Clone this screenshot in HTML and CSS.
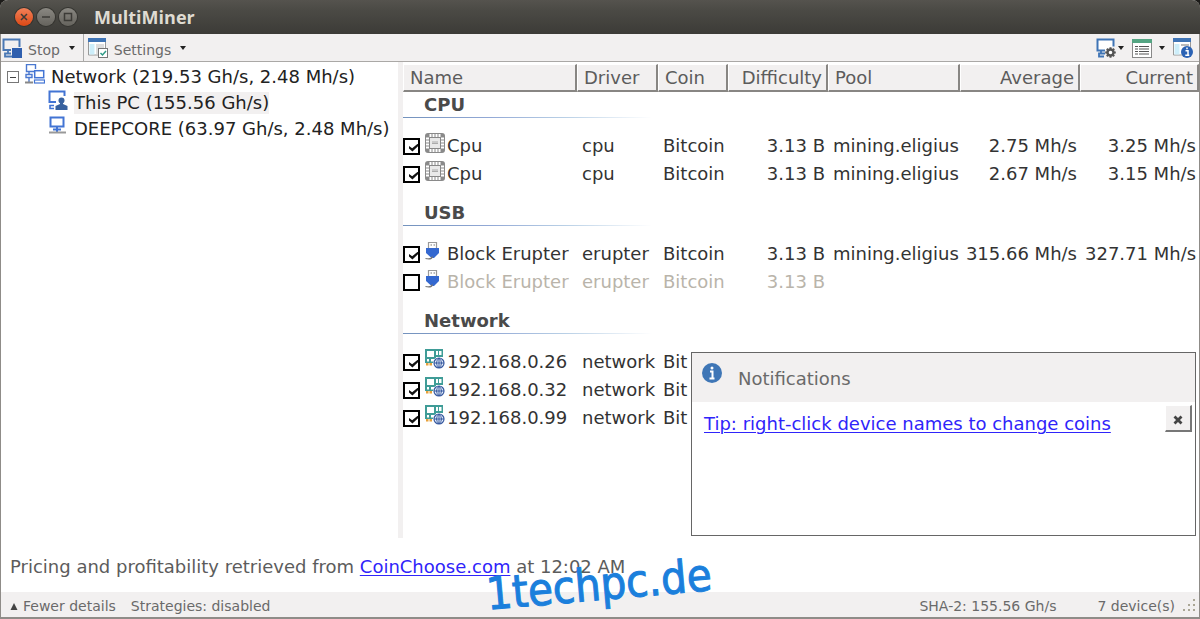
FILE: index.html
```html
<!DOCTYPE html>
<html lang="en">
<head>
<meta charset="utf-8">
<title>MultiMiner</title>
<link rel="stylesheet" href="styles.css">
</head>
<body>
<svg class="defs" aria-hidden="true">
  <symbol id="chip" viewBox="0 0 20 20">
    <rect x="0" y="0" width="20" height="20" rx="3" fill="#8a8a8a"/>
    <path d="M5.500 1v3M8.500 1v3M11.500 1v3M14.500 1v3M5.500 16v3M8.500 16v3M11.500 16v3M14.500 16v3M1 5.500h3M1 8.500h3M1 11.500h3M1 14.500h3M16 5.500h3M16 8.500h3M16 11.500h3M16 14.500h3" stroke="#fff" stroke-width="2"/>
    <rect x="4.500" y="4.500" width="11" height="11" fill="#e9e9e9" stroke="#888"/>
    <path d="M7 9h6M7 10.500h6" stroke="#aaa"/>
  </symbol>
  <symbol id="usb" viewBox="0 0 20 20">
    <path d="M3.500 7V1.500h8V7" fill="#fff" stroke="#999" stroke-width="1.200"/>
    <path d="M5.500 4h1.500M8.500 4H10" stroke="#777"/>
    <path d="M1 7h13v5l-5 5H6.500L1 12z" fill="#3468d0"/>
    <path d="M.5 17.500q6 1.500 7-2" fill="none" stroke="#777" stroke-width="1.200"/>
  </symbol>
  <symbol id="card" viewBox="0 0 20 20">
    <path d="M0 0h18v8h-7v6H0z" fill="#3f9c97"/>
    <path d="M2 2h7v6H2zM11 2h2v4h-2zM14 2h2.500v4H14zM2 10h2v2.500H2zM6 10h4v2.500H6z" fill="#fff"/>
    <path d="M1 14h2.500v2.500H1zM4.500 14H7v2.500H4.500z" fill="#e7a13a"/>
    <circle cx="14" cy="14" r="6" fill="#fff"/>
    <circle cx="14" cy="14" r="5" fill="#e8f0fb" stroke="#36589f" stroke-width="1.200"/>
    <path d="M9 14h10M14 9v10M14 9q-5 5 0 10M14 9q5 5 0 10" fill="none" stroke="#36589f" stroke-width="1"/>
  </symbol>
  <symbol id="gear-pc" viewBox="0 0 20 20">
    <path d="M9 12.500H1.500v-11h16v7" fill="#fff" stroke="#3f74b5" stroke-width="2"/>
    <path d="M5 13v2.500M9 15.500H3v3h5" fill="none" stroke="#3f74b5" stroke-width="1.800"/>
    <circle cx="14.500" cy="14.500" r="3" fill="#fff" stroke="#555" stroke-width="2.400"/>
    <path d="M14.500 9.200v2M14.500 17.800v2M9.200 14.500h2M17.800 14.500h2M10.800 10.800l1.400 1.400M16.800 16.800l1.400 1.400M18.200 10.800l-1.400 1.400M12.200 16.800l-1.400 1.400" stroke="#555" stroke-width="2"/>
  </symbol>
  <symbol id="sheet" viewBox="0 0 20 20">
    <rect x=".5" y="1.500" width="19" height="18" fill="#fff" stroke="#888"/>
    <path d="M0 1h20v4H0z" fill="#55a583"/>
    <path d="M3 8.500h3M7 8.500h10M3 11h3M7 11h10M3 13.500h3M7 13.500h10M3 16h3M7 16h10" stroke="#555" stroke-width="1.200"/>
  </symbol>
  <symbol id="layout-info" viewBox="0 0 20 20">
    <path d="M.5 1.500h17V17H.5z" fill="#fff" stroke="#999"/>
    <path d="M0 0h18v4H0z" fill="#3f74b5"/>
    <path d="M1.500 6h5v10.500h-5z" fill="#cdeefa"/><path d="M8 6h8v2H8z" fill="#bbb"/>
    <circle cx="14" cy="14" r="6" fill="#2b62b4"/>
    <path d="M12.500 12.800H15v4M12.300 17.200h4M14 9.500v1.800" fill="none" stroke="#fff" stroke-width="1.500"/>
  </symbol>
</svg>

<div class="window">
  <header class="titlebar">
    <button class="wm wm-close" aria-label="Close"><svg viewBox="0 0 18 18"><path d="M6 6l6 6M12 6l-6 6"/></svg></button>
    <button class="wm" aria-label="Minimize"><svg viewBox="0 0 18 18"><path d="M5 9h8"/></svg></button>
    <button class="wm" aria-label="Maximize"><svg viewBox="0 0 18 18"><path d="M5.500 5.500h7v7h-7z"/></svg></button>
    <h1>MultiMiner</h1>
  </header>

  <div class="toolbar">
    <button class="tool">
      <svg class="icon" viewBox="0 0 20 20"><path d="M9 12H1.500V1.500h16V9" fill="#f2f0f0" stroke="#4a78b4" stroke-width="2"/><path d="M6 13v2.500M9 15.500H3v3h7" fill="none" stroke="#4a78b4" stroke-width="1.800"/><rect x="10" y="10" width="10" height="10" fill="#2f5fae"/></svg>
      <span>Stop</span><i class="caret"></i>
    </button>
    <button class="tool tool-settings">
      <svg class="icon" viewBox="0 0 20 20"><path d="M.5 1.500h17V17H.5z" fill="#fff" stroke="#999"/><path d="M0 0h18v4H0z" fill="#3f74b5"/><path d="M1.500 6h5v10.500h-5z" fill="#cdeefa"/><path d="M8 6h8v10H8z" fill="#ddd"/><rect x="10.500" y="10.500" width="9" height="9" fill="#fff" stroke="#777"/><path d="M12.500 15l2 2 3.500-4" fill="none" stroke="#2f9a86" stroke-width="1.500"/></svg>
      <span>Settings</span><i class="caret"></i>
    </button>
    <div class="tools-right">
      <button class="tool" aria-label="Remote settings"><svg class="icon"><use href="#gear-pc"/></svg><i class="caret"></i></button>
      <button class="tool" aria-label="List view"><svg class="icon"><use href="#sheet"/></svg><i class="caret"></i></button>
      <button class="tool" aria-label="About"><svg class="icon"><use href="#layout-info"/></svg></button>
    </div>
  </div>

  <main class="panes">
    <nav class="tree">
      <ul>
        <li>
          <div class="node">
            <button class="expander" aria-label="Collapse"></button>
            <svg class="icon" viewBox="0 0 20 20"><path d="M9 7.500H1.500v-7h9V5M4 8v3M1 10.500h6v3H1zM4 14v4" fill="none" stroke="#4a78d0" stroke-width="1.400"/><path d="M0 18.500h8" stroke="#888" stroke-width="2"/><rect x="9.700" y="6.700" width="9" height="7" fill="#fff" stroke="#4274d4" stroke-width="1.500"/><rect x="9.500" y="16" width="10" height="3" fill="#fff" stroke="#4274d4" stroke-width="1.200"/></svg>
            <span>Network (219.53 Gh/s, 2.48 Mh/s)</span>
          </div>
          <ul>
            <li class="node">
              <svg class="icon" viewBox="0 0 20 20"><path d="M8 12H1.500V1.500h15V6" fill="none" stroke="#4274d4" stroke-width="2"/><path d="M6 15.500H2v3h4" fill="none" stroke="#4274d4" stroke-width="1.600"/><circle cx="13.500" cy="10.500" r="3" fill="#37619f"/><path d="M12 12h3v2l4.500 2v4h-12v-4l4.500-2z" fill="#37619f"/></svg>
              <span class="selected">This PC (155.56 Gh/s)</span>
            </li>
            <li class="node">
              <svg class="icon" viewBox="0 0 20 20"><rect x="2.500" y="1.500" width="13" height="9" fill="#fff" stroke="#4274d4" stroke-width="2"/><path d="M5 13.500h8M9 11v5" stroke="#4274d4" stroke-width="2"/><path d="M1 16.500h17" stroke="#999" stroke-width="2"/></svg>
              <span>DEEPCORE (63.97 Gh/s, 2.48 Mh/s)</span>
            </li>
          </ul>
        </li>
      </ul>
    </nav>

    <section class="list">
      <table>
        <colgroup><col class="c-name"><col class="c-driver"><col class="c-coin"><col class="c-diff"><col class="c-pool"><col class="c-avg"><col></colgroup>
        <thead>
          <tr><th>Name</th><th>Driver</th><th>Coin</th><th class="num">Difficulty</th><th>Pool</th><th class="num">Average</th><th class="num">Current</th></tr>
        </thead>
        <tbody>
          <tr class="group first"><th colspan="7"><span>CPU</span></th></tr>
          <tr><td><label class="device"><input type="checkbox" checked><svg class="icon"><use href="#chip"/></svg>Cpu</label></td><td>cpu</td><td>Bitcoin</td><td class="num">3.13 B</td><td>mining.eligius</td><td class="num">2.75 Mh/s</td><td class="num">3.25 Mh/s</td></tr>
          <tr><td><label class="device"><input type="checkbox" checked><svg class="icon"><use href="#chip"/></svg>Cpu</label></td><td>cpu</td><td>Bitcoin</td><td class="num">3.13 B</td><td>mining.eligius</td><td class="num">2.67 Mh/s</td><td class="num">3.15 Mh/s</td></tr>
        </tbody>
        <tbody>
          <tr class="group"><th colspan="7"><span>USB</span></th></tr>
          <tr><td><label class="device"><input type="checkbox" checked><svg class="icon"><use href="#usb"/></svg>Block Erupter</label></td><td>erupter</td><td>Bitcoin</td><td class="num">3.13 B</td><td>mining.eligius</td><td class="num">315.66 Mh/s</td><td class="num">327.71 Mh/s</td></tr>
          <tr class="off"><td><label class="device"><input type="checkbox"><svg class="icon"><use href="#usb"/></svg>Block Erupter</label></td><td>erupter</td><td>Bitcoin</td><td class="num">3.13 B</td><td></td><td></td><td></td></tr>
        </tbody>
        <tbody>
          <tr class="group"><th colspan="7"><span>Network</span></th></tr>
          <tr><td><label class="device"><input type="checkbox" checked><svg class="icon"><use href="#card"/></svg>192.168.0.26</label></td><td>network</td><td>Bit</td><td></td><td></td><td></td><td></td></tr>
          <tr><td><label class="device"><input type="checkbox" checked><svg class="icon"><use href="#card"/></svg>192.168.0.32</label></td><td>network</td><td>Bit</td><td></td><td></td><td></td><td></td></tr>
          <tr><td><label class="device"><input type="checkbox" checked><svg class="icon"><use href="#card"/></svg>192.168.0.99</label></td><td>network</td><td>Bit</td><td></td><td></td><td></td><td></td></tr>
        </tbody>
      </table>

      <aside class="notice">
        <header>
          <svg class="icon" viewBox="0 0 20 20"><circle cx="10" cy="10" r="10" fill="#3f76b6"/><path d="M8 8.500h2.500V15M7.500 15.500h5" fill="none" stroke="#fff" stroke-width="2"/><circle cx="10" cy="5" r="1.500" fill="#fff"/></svg>
          <h2>Notifications</h2>
        </header>
        <div class="notice-body">
          <a href="#">Tip: right-click device names to change coins</a>
          <button aria-label="Dismiss"><svg viewBox="0 0 10 10"><path d="M1.500 1.500l7 7M8.500 1.500l-7 7" stroke="#444" stroke-width="2.800"/></svg></button>
        </div>
      </aside>
    </section>
  </main>

  <p class="pricing">Pricing and profitability retrieved from <a href="#">CoinChoose.com</a> at 12:02 AM</p>

  <footer class="status">
    <button class="details"><svg viewBox="0 0 8 8"><path d="M4 1l3.500 7h-7z"/></svg>Fewer details</button>
    <span>Strategies: disabled</span>
    <span class="rate">SHA-2: 155.56 Gh/s</span>
    <span class="count">7 device(s)</span>
    <svg class="grip" viewBox="0 0 14 14"><path d="M11 0h2v2h-2zM6 5h2v2H6zM11 5h2v2h-2zM1 10h2v2H1zM6 10h2v2H6zM11 10h2v2h-2z"/></svg>
  </footer>
  <div class="watermark">1techpc.de</div>
</div>
</body>
</html>
```

FILE: styles.css
```css
* { box-sizing: border-box; }
body {
  margin: 0;
  background: #1c1b19;
  font: 18px/26px "DejaVu Sans", sans-serif;
  color: #333;
}
button { font: inherit; color: inherit; background: none; border: 0; padding: 0; }
h1, h2, p, ul { margin: 0; padding: 0; list-style: none; font-weight: normal; }
a { color: #2f24fa; text-decoration-thickness: 1px; text-underline-offset: 2px; }
.defs { position: absolute; width: 0; height: 0; }
.icon { width: 20px; height: 20px; flex: none; display: block; }

.window {
  position: relative;
  display: flex;
  flex-direction: column;
  min-height: 100vh;
  border: 1px solid #8f8c88;
  border-top: 0;
  border-bottom-width: 2px;
  border-radius: 8px 8px 0 0;
  background: #fff;
}

.titlebar {
  display: flex;
  align-items: center;
  gap: 4px;
  height: 34px;
  margin: 0 -1px;
  padding: 0 15px;
  border-radius: 8px 8px 0 0;
  background: linear-gradient(#55534e, #4b4a45 30%, #3c3b37);
}
.titlebar h1 {
  margin-left: 13px;
  font: bold 18px/24px "Open Sans", sans-serif;
  color: #dfdbd2;
}
.wm { width: 18px; height: 18px; border-radius: 50%; background: linear-gradient(#8a8882, #65635d); box-shadow: 0 0 0 1px #353430; }
.wm svg { display: block; fill: none; stroke: #3c3b37; stroke-width: 1.5; }
.wm-close { background: linear-gradient(#f28159, #dd4814); }

.toolbar {
  display: flex;
  align-items: stretch;
  height: 28px;
  padding-right: 6px;
  background: #f2f0f0;
  border-bottom: 1px solid #aaa8a6;
  font-size: 14px;
  line-height: 20px;
  color: #6a6a6a;
}
.tool { display: flex; align-items: center; padding: 0 8px 0 1px; }
.tool span { margin: 5px 9px 0 6px; }
.tool-settings { border-left: 1px solid #aaa; padding-left: 4px; }
.caret { border: 3px solid transparent; border-top: 4px solid #222; border-bottom: 0; }
.tools-right { display: flex; margin-left: auto; }
.tools-right .tool { padding: 0; }
.tools-right .tool + .tool { padding-left: 8px; }
.tools-right .caret { margin-left: 2px; }
.tools-right .tool + .tool .caret { margin-left: 7px; }

.panes { display: flex; flex: 1; min-height: 476px; }
.tree { width: 402px; flex: none; padding-top: 2px; border-right: 5px solid #f2f0f0; color: #222; }
.tree ul ul { padding-left: 47px; }
.node { display: flex; align-items: center; height: 26px; gap: 6px; white-space: nowrap; }
.node .icon { margin-bottom: 6px; }
.node span { line-height: 22px; }
.tree > ul > li > .node { padding-left: 6px; }
.expander { width: 12px; height: 12px; border: 1px solid #777; display: grid; place-items: center; }
.expander::before { content: ""; width: 6px; height: 1px; background: #444; }
.selected { background: #f2f0f0; }

.list { position: relative; flex: 1; min-width: 0; padding-top: 2px; }
table { width: 100%; table-layout: fixed; border-collapse: separate; border-spacing: 0; }
.c-name { width: 174px; }
.c-driver { width: 81px; }
.c-coin { width: 70px; }
.c-diff { width: 100px; }
.c-pool { width: 132px; }
.c-avg { width: 120px; }
thead th {
  height: 28px;
  padding: 0 5px 0 6px;
  background: #f2f0f0;
  border: 1px solid #fff;
  border-right: 2px solid #888683;
  border-bottom: 2px solid #888683;
  font-weight: normal;
  line-height: 24px;
  text-align: left;
  color: #5c5c5c;
}
td { height: 28px; padding: 0 3px 0 5px; line-height: 28px; white-space: nowrap; }
td:first-child { padding: 0; }
.num { text-align: right; }
thead .num { padding-right: 4px; text-align: right; }
.group th { height: 52px; padding: 0 0 14px; vertical-align: bottom; text-align: left; }
.group.first th { height: 40px; }
.group span {
  display: block;
  width: 249px;
  padding: 0 0 1px 21px;
  background: linear-gradient(90deg, #7392bd, #93a9d6 35%, #b9d0e6 65%, #fff) bottom / 100% 1px no-repeat;
  line-height: 24px;
  color: #4a4a4a;
}
.off { color: #b9b4aa; }
.device { display: flex; align-items: center; }
.device .icon { margin: 0 2px 6px 5px; }
.device input {
  appearance: none;
  width: 17px;
  height: 17px;
  margin: 0;
  border: 2px solid #000;
  background: #fff;
}
.device input:checked::before {
  content: "";
  display: block;
  width: 9px;
  height: 8px;
  margin: 4px 0 0 4px;
  background: #111;
  clip-path: polygon(0 30%, 35% 60%, 100% 0, 100% 35%, 38% 100%, 0 62%);
}

.notice {
  position: absolute;
  right: 3px;
  bottom: 2px;
  width: 505px;
  height: 184px;
  border: 1px solid #666;
  background: #fff;
}
.notice header { display: flex; align-items: center; height: 49px; gap: 16px; padding-left: 10px; background: #f2f0f0; }
.notice header .icon { margin-bottom: 10px; }
.notice h2 { font-size: 18px; line-height: 24px; padding-top: 2px; color: #6a6a6a; }
.notice-body { display: flex; justify-content: space-between; padding: 3px 3px 0 12px; }
.notice-body a { padding-top: 6px; }
.notice-body button {
  display: grid;
  place-items: center;
  width: 27px;
  height: 27px;
  padding-top: 4px;
  background: #f2f0f0;
  border: 1px solid #fff;
  border-right: 2px solid #777;
  border-bottom: 2px solid #777;
}
.notice-body svg { width: 10px; height: 10px; }

.pricing { height: 54px; padding: 16px 9px 0; color: #5c5c5c; }
.status {
  display: flex;
  align-items: center;
  height: 25px;
  padding: 2px 3px 0 9px;
  background: #f2f0f0;
  font-size: 14px;
  line-height: 20px;
  color: #6a6a6a;
}
.details { display: flex; align-items: center; gap: 5px; margin-right: 15px; }
.details svg { width: 8px; height: 8px; fill: #444; }
.rate { margin-left: auto; }
.count { margin-left: 41px; }
.grip { width: 14px; height: 14px; margin-left: 7px; fill: #aaa695; }

.watermark {
  position: absolute;
  left: 485px;
  bottom: 10px;
  font: 45px/44px "DejaVu Sans Condensed", "DejaVu Sans", sans-serif;
  color: #1b7fdc;
  -webkit-text-stroke: 1px #1b7fdc;
  transform: rotate(-5deg);
  pointer-events: none;
}
```
